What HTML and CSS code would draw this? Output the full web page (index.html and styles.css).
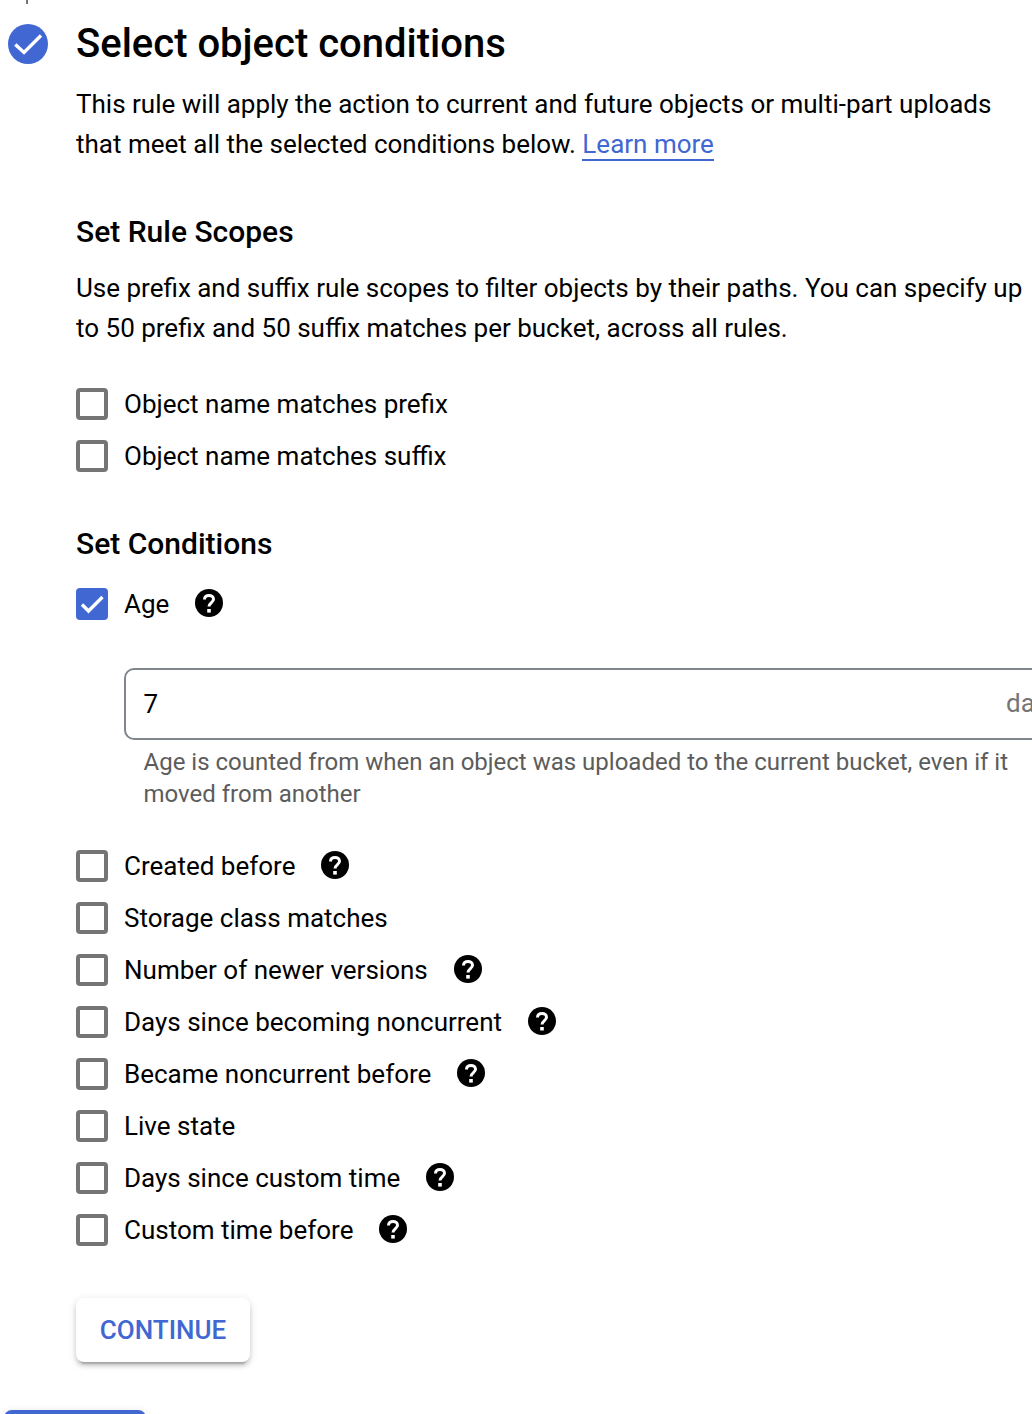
FILE: index.html
```html
<!DOCTYPE html>
<html lang="en">
<head>
<meta charset="utf-8">
<title>Select object conditions</title>
<link rel="stylesheet" href="styles.css">
</head>
<body>
<svg class="defs" aria-hidden="true">
  <symbol id="help" viewBox="0 0 28 28"><circle cx="14" cy="14" r="14"/><path class="hook" d="M9.500 10.600C9.500 7.900 11.400 6.400 14 6.400s4.500 1.500 4.500 3.900c0 3.200-4.500 3.400-4.500 7.300"/><path class="dot" d="M12.200 20h3.600v3.600h-3.600z"/></symbol>
</svg>
<main class="page">
  <section class="step">
    <div class="rail">
      <div class="rail-line"></div>
      <svg class="step-icon" viewBox="0 0 40 40"><circle cx="20" cy="20" r="20"/><path d="M7.300 20.500 L16 28.500 L33 11.500"/></svg>
    </div>
    <div class="content">
      <h1 class="title">Select object conditions</h1>
      <p class="text intro">This rule will apply the action to current and future objects or multi-part uploads<br>that meet all the selected conditions below. <a class="link" href="#">Learn more</a></p>

      <h2 class="heading">Set Rule Scopes</h2>
      <p class="text scopes">Use prefix and suffix rule scopes to filter objects by their paths. You can specify up<br>to 50 prefix and 50 suffix matches per bucket, across all rules.</p>
      <div class="options">
        <label class="option"><span class="box"></span><span>Object name matches prefix</span></label>
        <label class="option"><span class="box"></span><span>Object name matches suffix</span></label>
      </div>

      <h2 class="heading conditions">Set Conditions</h2>
      <label class="option age"><span class="box checked"><svg class="tick" viewBox="0 0 32 32"><path d="M6 16.500 L12.500 23 L26.500 9"/></svg></span><span>Age</span><svg class="help"><use href="#help"/></svg></label>
      <div class="field">
        <div class="input"><span>7</span><span class="suffix">days</span></div>
        <p class="hint">Age is counted from when an object was uploaded to the current bucket, even if it<br>moved from another</p>
      </div>
      <div class="options">
        <label class="option"><span class="box"></span><span>Created before</span><svg class="help"><use href="#help"/></svg></label>
        <label class="option"><span class="box"></span><span>Storage class matches</span></label>
        <label class="option"><span class="box"></span><span>Number of newer versions</span><svg class="help"><use href="#help"/></svg></label>
        <label class="option"><span class="box"></span><span>Days since becoming noncurrent</span><svg class="help"><use href="#help"/></svg></label>
        <label class="option"><span class="box"></span><span>Became noncurrent before</span><svg class="help"><use href="#help"/></svg></label>
        <label class="option"><span class="box"></span><span>Live state</span></label>
        <label class="option"><span class="box"></span><span>Days since custom time</span><svg class="help"><use href="#help"/></svg></label>
        <label class="option"><span class="box"></span><span>Custom time before</span><svg class="help"><use href="#help"/></svg></label>
      </div>
      <button class="continue" type="button">CONTINUE</button>
    </div>
  </section>
  <div class="primary"></div>
</main>
</body>
</html>
```
FILE: styles.css
```css
* { box-sizing: border-box; }
body {
  margin: 0;
  background: #fff;
  color: #000;
  font-family: Roboto, "Liberation Sans", sans-serif;
  font-size: 26px;
  line-height: 40px;
  overflow: hidden;
}
h1, h2, p { margin: 0; font-weight: 400; }
.defs { display: block; width: 0; height: 0; }
.page { height: 1414px; overflow: hidden; }
.step { display: flex; height: 1410px; }
.rail { flex: none; width: 76px; padding-left: 8px; }
.rail-line { width: 2px; height: 4px; margin-left: 18px; background: #757575; }
.step-icon { display: block; width: 40px; height: 40px; margin-top: 20px; fill: #4067d2; }
.step-icon path { fill: none; stroke: #fff; stroke-width: 3.400; }
.content { flex: 1; min-width: 0; padding-top: 20px; white-space: nowrap; }
.title { font-size: 40px; line-height: 48px; font-weight: 500; }
.intro { margin-top: 16px; }
.link { display: inline-block; height: 37px; color: #4067d2; text-decoration: none; border-bottom: 2px solid #4067d2; vertical-align: top; }
.heading { margin-top: 48px; font-size: 30px; line-height: 40px; font-weight: 500; }
.scopes { margin-top: 16px; }
.options { display: flex; flex-direction: column; }
.scopes + .options { margin-top: 30px; }
.option { display: flex; align-items: center; height: 52px; }
.box { flex: none; width: 32px; height: 32px; margin-right: 16px; border: 4px solid #757575; border-radius: 4px; }
.box.checked { border: 0; background: #4067d2; }
.tick { display: block; width: 32px; height: 32px; fill: none; stroke: #fff; stroke-width: 3.400; }
.help { width: 28px; height: 28px; margin: -2px 0 0 26px; }
.hook { fill: none; stroke: #fff; stroke-width: 3; }
.dot { fill: #fff; }
.conditions { margin-top: 42px; }
.age { margin-top: 14px; }
.field { margin: 38px 0 0 48px; }
.input { display: flex; justify-content: space-between; align-items: center; width: 960px; height: 72px; padding: 0 18px 0 17.500px; border: 2px solid #80868b; border-radius: 10px; }
.suffix { width: 58px; padding-bottom: 2px; color: #757575; }
.hint { margin: 6px 0 0 19.500px; color: #5c5c5c; font-size: 24px; line-height: 32px; }
.field + .options { margin-top: 30px; }
.continue { display: block; width: 174px; height: 64px; margin-top: 42px; padding: 0; border: 0; border-radius: 8px; background: #fff; color: #4067d2; font: 500 26px/64px Roboto, "Liberation Sans", sans-serif; box-shadow: 0 6px 2px -4px rgba(0,0,0,.2), 0 4px 4px rgba(0,0,0,.14), 0 2px 10px rgba(0,0,0,.12); }
.primary { width: 142px; height: 64px; margin-left: 4px; border-radius: 8px; background: #4067d2; box-shadow: 0 2px 10px rgba(0,0,0,.12); }
```
